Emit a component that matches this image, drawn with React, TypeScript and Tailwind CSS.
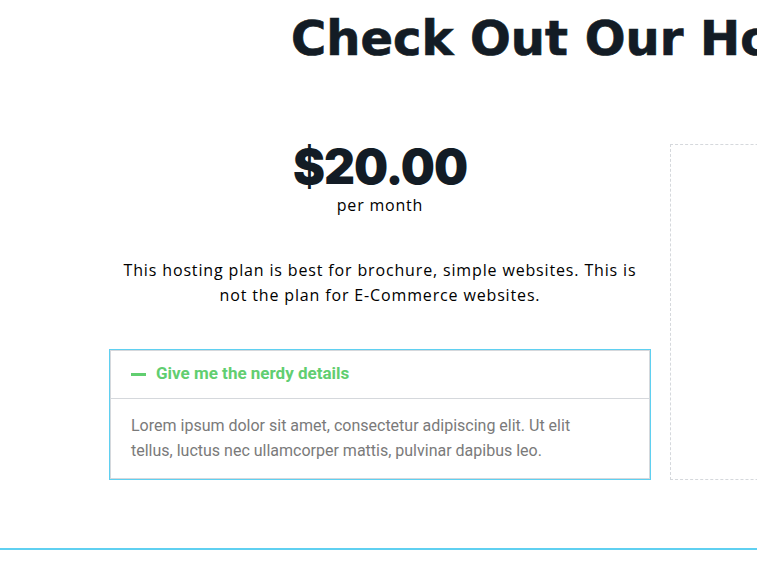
import React from 'react';

const Accordion: React.FC = () => {
  return (
    <div className="border border-[#5fd0f1] ring-1 ring-inset ring-[#d5d8dc]">
      <div className="flex items-center h-[49px] px-[21px] border-b border-[#d5d8dc]">
        <span className="block w-[15px] h-[3px] bg-[#61ce70] mr-[10px]" />
        <span className="font-['Roboto'] font-bold text-[17px] text-[#61ce70]">Give me the nerdy details</span>
      </div>
      <div className="pl-[21px] pr-[50px] pt-[14px] pb-[16px] font-['Roboto'] text-[16px] leading-[25px] text-[#7a7a7a]">
        Lorem ipsum dolor sit amet, consectetur adipiscing elit. Ut elit tellus, luctus nec ullamcorper mattis, pulvinar dapibus leo.
      </div>
    </div>
  );
};

export default function App() {
  return (
    <div className="w-[757px] h-[572px] bg-white overflow-hidden relative">
      <div className="pl-[291px] pt-[8px] whitespace-nowrap">
        <h1 className="font-['DejaVu_Sans'] font-bold text-[48px] leading-[60px] tracking-[0px] text-[#131c25] [-webkit-text-stroke:0.7px_#131c25]">
          Check Out Our Hosting Plans
        </h1>
      </div>

      <div className="flex gap-[19px] pl-[109px] mt-[76px]">
        <div className="w-[542px] shrink-0 pt-[1px]">
          <div className="text-center font-['Inter'] font-black text-[48px] leading-[44px] tracking-[-1px] text-[#131c25]">$20.00</div>
          <div className="text-center font-['Open_Sans'] text-[16px] leading-[22px] tracking-[0.8px] text-black mt-[5px]">per month</div>
          <p className="mt-[42px] px-[12px] text-center font-['Open_Sans'] text-[16px] leading-[25px] tracking-[0.85px] text-black">
            This hosting plan is best for brochure, simple websites. This is not the plan for E-Commerce websites.
          </p>
          <div className="mt-[41px]">
            <Accordion />
          </div>
        </div>
        <div className="w-[300px] shrink-0 h-[336px] border border-dashed border-[#d5d8dc]" />
      </div>

      <div className="mt-[68px] h-[2px] bg-[#5fd0f1]" />
    </div>
  );
}
